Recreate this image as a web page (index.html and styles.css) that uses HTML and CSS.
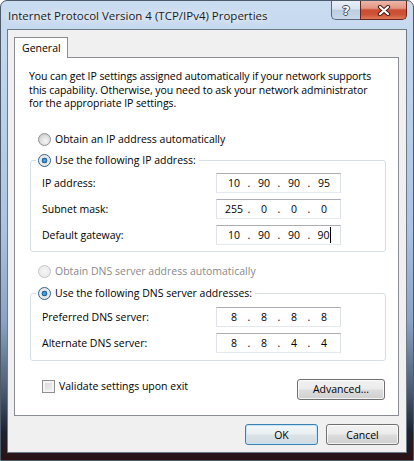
FILE: index.html
```html
<!DOCTYPE html>
<html lang="en">
<head>
    <meta charset="UTF-8">
    <title>Internet Protocol Version 4 (TCP/IPv4) Properties</title>
    <link rel="stylesheet" href="styles.css">
</head>
<body>
    <div class="window">
        <div class="titlebar">
            <span class="title">Internet Protocol Version 4 (TCP/IPv4) Properties</span>
            <div class="caption-buttons">
                <span class="cap-btn cap-help">?</span>
                <span class="cap-btn cap-close">
                    <svg width="14" height="11" viewBox="0 0 14 11">
                        <path d="M3 2 L11 9 M11 2 L3 9" stroke="#4a1e18" stroke-width="4.2" stroke-linecap="round"/>
                        <path d="M3 2 L11 9 M11 2 L3 9" stroke="#fff" stroke-width="2.2" stroke-linecap="round"/>
                    </svg>
                </span>
            </div>
        </div>

        <div class="client">
            <div class="tabs">
                <div class="tab">General</div>
            </div>

            <div class="panel">
                <p class="intro">You can get IP settings assigned automatically if your network supports<br>this capability. Otherwise, you need to ask your network administrator<br>for the appropriate IP settings.</p>

                <div class="option"><span class="radio"></span>Obtain an IP address automatically</div>

                <fieldset class="group group-ip">
                    <legend><span class="radio checked"></span>Use the following IP address:</legend>
                    <div class="field-row">
                        <span>IP address:</span>
                        <div class="ip-box"><span class="octet">10</span><span class="dot">.</span><span class="octet">90</span><span class="dot">.</span><span class="octet">90</span><span class="dot">.</span><span class="octet">95</span></div>
                    </div>
                    <div class="field-row">
                        <span>Subnet mask:</span>
                        <div class="ip-box"><span class="octet">255</span><span class="dot">.</span><span class="octet">0</span><span class="dot">.</span><span class="octet">0</span><span class="dot">.</span><span class="octet">0</span></div>
                    </div>
                    <div class="field-row">
                        <span>Default gateway:</span>
                        <div class="ip-box"><span class="octet">10</span><span class="dot">.</span><span class="octet">90</span><span class="dot">.</span><span class="octet">90</span><span class="dot">.</span><span class="octet"><span class="caret">90</span></span></div>
                    </div>
                </fieldset>

                <div class="option option-dns disabled"><span class="radio"></span>Obtain DNS server address automatically</div>

                <fieldset class="group group-dns">
                    <legend><span class="radio checked"></span>Use the following DNS server addresses:</legend>
                    <div class="field-row">
                        <span>Preferred DNS server:</span>
                        <div class="ip-box"><span class="octet">8</span><span class="dot">.</span><span class="octet">8</span><span class="dot">.</span><span class="octet">8</span><span class="dot">.</span><span class="octet">8</span></div>
                    </div>
                    <div class="field-row">
                        <span>Alternate DNS server:</span>
                        <div class="ip-box"><span class="octet">8</span><span class="dot">.</span><span class="octet">8</span><span class="dot">.</span><span class="octet">4</span><span class="dot">.</span><span class="octet">4</span></div>
                    </div>
                </fieldset>

                <div class="panel-foot">
                    <div class="check-line"><span class="checkbox"></span>Validate settings upon exit</div>
                    <button type="button" class="btn btn-advanced">Advanced...</button>
                </div>
            </div>

            <div class="dialog-buttons">
                <button type="button" class="btn btn-default">OK</button>
                <button type="button" class="btn">Cancel</button>
            </div>
        </div>
    </div>
</body>
</html>
```

FILE: styles.css
```css
* {
    margin: 0;
    padding: 0;
    box-sizing: border-box;
}

body {
    background: #fff;
    font-family: 'Open Sans', 'Noto Sans', sans-serif;
    font-size: 10.5px;
    color: #000;
    overflow: hidden;
}

/* Aero window frame */
.window {
    width: 414px;
    height: 461px;
    border: 1px solid #4c5a6b;
    border-radius: 7px 7px 0 0;
    background: linear-gradient(180deg, #cadcf0 0%, #bdd3ec 20%, #aac3e1 50%, #8aa3c2 70%, #4b5a70 85%, #1c232e 94%, #2a1216 100%);
    padding: 0 6px 7px 6px;
    display: flex;
    flex-direction: column;
    overflow: hidden;
}

.titlebar {
    height: 28px;
    display: flex;
    align-items: center;
    justify-content: space-between;
}

.title {
    padding-left: 1px;
    font-size: 11.5px;
    color: #1b1b1b;
    text-shadow: 0 0 6px #fff, 0 0 10px rgba(255, 255, 255, 0.9);
}

.caption-buttons {
    display: flex;
    align-self: flex-start;
}

.cap-btn {
    height: 19px;
    display: flex;
    align-items: center;
    justify-content: center;
    border: 1px solid #5a6778;
    border-top: none;
}

.cap-help {
    width: 29px;
    border-radius: 0 0 0 5px;
    border-right: none;
    background: linear-gradient(180deg, #e8eff7 0%, #d8e3ef 45%, #bccde1 50%, #c9d8ea 100%);
    color: #fff;
    font-family: 'DejaVu Sans', sans-serif;
    font-weight: bold;
    font-size: 13px;
    text-shadow: -1px 0 #3c4a5c, 1px 0 #3c4a5c, 0 -1px #3c4a5c, 0 1px #3c4a5c;
}

.cap-close {
    width: 47px;
    border-color: #6a2419;
    border-radius: 0 0 5px 0;
    background: linear-gradient(180deg, #ebb5a8 0%, #e29683 40%, #cc4d32 50%, #cd5236 75%, #e07a5c 100%);
}

/* Dialog client area */
.client {
    flex: 1;
    background: #f0f0f0;
    border: 1px solid #6d7a8a;
    padding: 7px 7px 0 6px;
}

.tabs {
    display: flex;
}

.tab {
    width: 54px;
    height: 21px;
    margin-bottom: -1px;
    padding: 3px 0 0 7px;
    background: #fff;
    border: 1px solid #898c95;
    border-bottom: none;
    position: relative;
    z-index: 1;
}

.panel {
    width: 385px;
    height: 359px;
    background: #fff;
    border: 1px solid #898c95;
}

.intro {
    margin: 12px 0 0 14px;
    line-height: 13.5px;
    letter-spacing: -0.07px;
    white-space: nowrap;
}

.option {
    display: flex;
    align-items: center;
    height: 15px;
    margin: 21px 0 0 23px;
}

.option.option-dns {
    margin-top: 12px;
}

.option.disabled {
    color: #8a8a8a;
}

/* Radio buttons and check box */
.radio {
    width: 13px;
    height: 13px;
    margin-right: 4px;
    border-radius: 50%;
    border: 1px solid #8f8f8f;
    background: radial-gradient(circle at 60% 65%, #f6f6f6 0%, #dcdcdc 55%, #cfcfcf 70%, #ececec 100%);
    flex-shrink: 0;
}

.radio.checked {
    border-color: #2c628b;
    background: radial-gradient(circle at 50% 50%, #58b5ee 0%, #2d84c4 22%, #1b4f82 33%, #e4e4e4 40%, #f6f6f6 100%);
}

.disabled .radio {
    border-color: #c4c4c4;
    background: radial-gradient(circle at 50% 50%, #f6f6f6 0%, #ececec 60%, #f4f4f4 100%);
}

.checkbox {
    width: 13px;
    height: 13px;
    margin-right: 4px;
    border: 1px solid #8f8f8f;
    background: linear-gradient(135deg, #d4d4d4 0%, #f4f4f4 100%);
    box-shadow: inset 0 0 0 2px #f4f4f4;
}

/* Group boxes */
.group {
    width: 356px;
    margin-left: 15px;
    border: 1px solid #d5dfe5;
    border-radius: 3px;
    padding: 0 44px 6px 11px;
}

.group-ip {
    margin-top: 6px;
}

.group-dns {
    margin-top: 7px;
    padding-bottom: 7px;
}

.group legend {
    display: flex;
    align-items: center;
    height: 15px;
    margin-left: -6px;
    padding: 0 3px 0 2px;
}

.field-row {
    display: flex;
    align-items: center;
    justify-content: space-between;
    margin-top: 6px;
}

.group-ip .field-row:first-of-type {
    margin-top: 5px;
}

.ip-box {
    width: 125px;
    height: 20px;
    display: flex;
    align-items: center;
    padding-left: 6px;
    border: 1px solid;
    border-color: #abadb3 #dbdfe6 #e3e9ef #e2e3ea;
}

.octet {
    width: 22px;
    text-align: center;
}

.dot {
    width: 8px;
    text-align: center;
}

.caret {
    border-right: 1px solid #000;
    padding: 1px 0;
}

.panel-foot {
    display: flex;
    justify-content: space-between;
    align-items: flex-start;
    margin: 18px 13px 0 27px;
}

.check-line {
    display: flex;
    align-items: center;
    height: 15px;
}

/* Push buttons */
.btn {
    height: 21px;
    font-family: inherit;
    font-size: inherit;
    color: #000;
    border: 1px solid #707070;
    border-radius: 3px;
    background: linear-gradient(180deg, #f2f2f2 0%, #ebebeb 48%, #dddddd 52%, #cfcfcf 100%);
    box-shadow: inset 0 0 0 1px rgba(255, 255, 255, 0.75);
}

.btn-advanced {
    width: 88px;
}

.dialog-buttons {
    display: flex;
    justify-content: flex-end;
    gap: 8px;
    margin-top: 8px;
}

.dialog-buttons .btn {
    width: 73px;
}

.btn-default {
    border-color: #3c7fb1;
    background: linear-gradient(180deg, #f3f7f9 0%, #e9eff2 48%, #dae3e8 52%, #d0dadf 100%);
    box-shadow: inset 0 0 0 1px #c2e6f8;
}
```
